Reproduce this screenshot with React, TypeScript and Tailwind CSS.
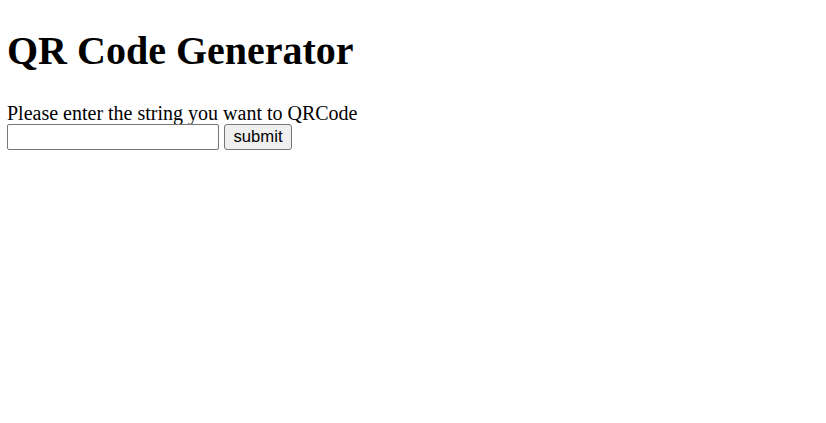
export default function App() {
  return (
    <div className="min-h-screen bg-white px-[7px] text-black font-['Liberation_Serif',serif]">
      <h1 className="pt-[29px] text-[40px] font-bold leading-[44px] m-0">QR Code Generator</h1>
      <p className="mt-[29px] text-[20px] leading-[22px]">Please enter the string you want to QRCode</p>
      <div className="flex items-start gap-[5px]">
        <input
          type="text"
          className="w-[212px] h-[26px] border border-[#767676] rounded-[2px] px-[2px] text-[16.67px] font-['Liberation_Sans',sans-serif] outline-none bg-white"
        />
        <button className="h-[26px] w-[68px] border border-[#767676] rounded-[3px] bg-[#efefef] text-[16.67px] leading-[20px] font-['Liberation_Sans',sans-serif] text-black">
          submit
        </button>
      </div>
    </div>
  );
}
